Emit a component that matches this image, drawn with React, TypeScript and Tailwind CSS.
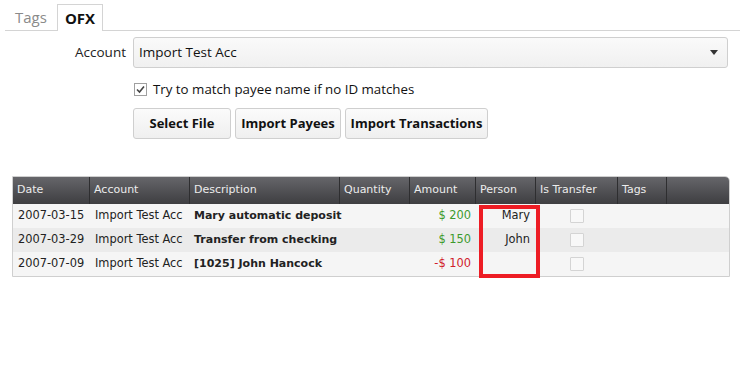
import React from "react";

const rows = [
  { date: "2007-03-15", account: "Import Test Acc", desc: "Mary automatic deposit", amount: "$ 200", neg: false, person: "Mary" },
  { date: "2007-03-29", account: "Import Test Acc", desc: "Transfer from checking", amount: "$ 150", neg: false, person: "John" },
  { date: "2007-07-09", account: "Import Test Acc", desc: "[1025] John Hancock", amount: "-$ 100", neg: true, person: "" },
];

const cols = [
  { name: "Date", w: "w-[77px]" },
  { name: "Account", w: "w-[100px]" },
  { name: "Description", w: "w-[150px]" },
  { name: "Quantity", w: "w-[70px]" },
  { name: "Amount", w: "w-[66px]" },
  { name: "Person", w: "w-[60px]" },
  { name: "Is Transfer", w: "w-[82px]" },
  { name: "Tags", w: "w-[49px]" },
];

function App() {
  const ui = { fontFamily: '"Open Sans", "Noto Sans", sans-serif' };
  const grid = { fontFamily: '"DejaVu Sans", Verdana, sans-serif' };

  return (
    <div className="w-[744px] h-[382px] bg-white relative overflow-hidden" style={ui}>
      {/* tabs */}
      <div className="flex items-end h-[31px] pl-[5px] pt-[4px] mr-[4px]">
        <div className="flex items-end h-full border-b border-[#d4d4d4] w-full">
          <div className="px-[10px] h-full flex items-center text-[15px] text-[#8a8a8a]">Tags</div>
          <div className="px-[7px] h-[27px] flex items-center text-[15px] font-bold text-[#111] border-l border-r border-t border-[#d4d4d4] bg-white -mb-px">
            OFX
          </div>
        </div>
      </div>

      {/* form */}
      <div className="flex items-center mt-[6px]">
        <div className="w-[126px] text-right text-[13.5px] text-[#222]">Account</div>
        <div className="ml-[7px] w-[595px] h-[31px] rounded-[3px] border border-[#cfcfcf] bg-gradient-to-b from-[#fafafa] to-[#f0f0f0] flex items-center justify-between px-[5px] text-[13.5px] text-[#111]">
          <span>Import Test Acc</span>
          <svg width="8" height="5" viewBox="0 0 8 5" className="mr-[4px]">
            <path d="M0 0 L8 0 L4 5 Z" fill="#333" />
          </svg>
        </div>
      </div>

      <div className="flex items-center ml-[134px] mt-[12px] gap-[6px]">
        <div className="w-[13px] h-[13px] border border-[#a0a0a0] bg-white flex items-center justify-center">
          <svg width="9" height="9" viewBox="0 0 9 9">
            <path d="M1 4.5 L3.5 7 L8 1.5" stroke="#444" strokeWidth="1.6" fill="none" />
          </svg>
        </div>
        <span className="text-[13.3px] text-[#111]">Try to match payee name if no ID matches</span>
      </div>

      <div className="flex ml-[133px] mt-[8px] gap-[4px]">
        {[
          ["Select File", "w-[98px]"],
          ["Import Payees", "w-[106px]"],
          ["Import Transactions", "w-[143px]"],
        ].map(([t, w]) => (
          <div
            key={t}
            className={`${w} h-[31px] rounded-[3px] border border-[#cfcfcf] bg-gradient-to-b from-[#fbfbfb] to-[#efefef] flex items-center justify-center whitespace-nowrap text-[13px] font-bold text-[#111]`}
          >
            {t}
          </div>
        ))}
      </div>

      {/* grid */}
      <div className="ml-[12px] mt-[37px] w-[718px] border border-[#cfcfcf] rounded-tr-[5px] overflow-hidden" style={grid}>
        <div className="flex h-[27px] bg-gradient-to-b from-[#66666a] to-[#3e3e41] text-[11px] text-[#ececec]">
          {cols.map((c) => (
            <div key={c.name} className={`${c.w} border-r border-[#2e2e30] flex items-center px-[4px]`}>
              {c.name}
            </div>
          ))}
          <div className="flex-1" />
        </div>
        {rows.map((r, i) => (
          <div key={r.date} className={`flex h-[24px] items-center text-[11.4px] text-[#222] ${i === 1 ? "bg-[#ebebeb]" : "bg-[#f5f5f5]"}`}>
            <div className="w-[77px] pl-[5px] whitespace-nowrap">{r.date}</div>
            <div className="w-[100px] pl-[5px] whitespace-nowrap">{r.account}</div>
            <div className="w-[150px] px-[4px] font-bold text-[11px] whitespace-nowrap">{r.desc}</div>
            <div className="w-[70px]" />
            <div className={`w-[66px] px-[5px] text-right whitespace-nowrap ${r.neg ? "text-[#d0202a]" : "text-[#3c9a2c]"}`}>{r.amount}</div>
            <div className="w-[60px] px-[6px] text-right">{r.person}</div>
            <div className="w-[82px] flex justify-center">
              <div className="w-[14px] h-[14px] border border-[#d4d4d4] bg-[#f8f8f8] rounded-[1px]" />
            </div>
          </div>
        ))}
      </div>

      {/* highlight */}
      <div className="absolute left-[479px] top-[205px] w-[61px] h-[73px] border-[4px] border-[#ed1c24]" />
    </div>
  );
}

export default App;
